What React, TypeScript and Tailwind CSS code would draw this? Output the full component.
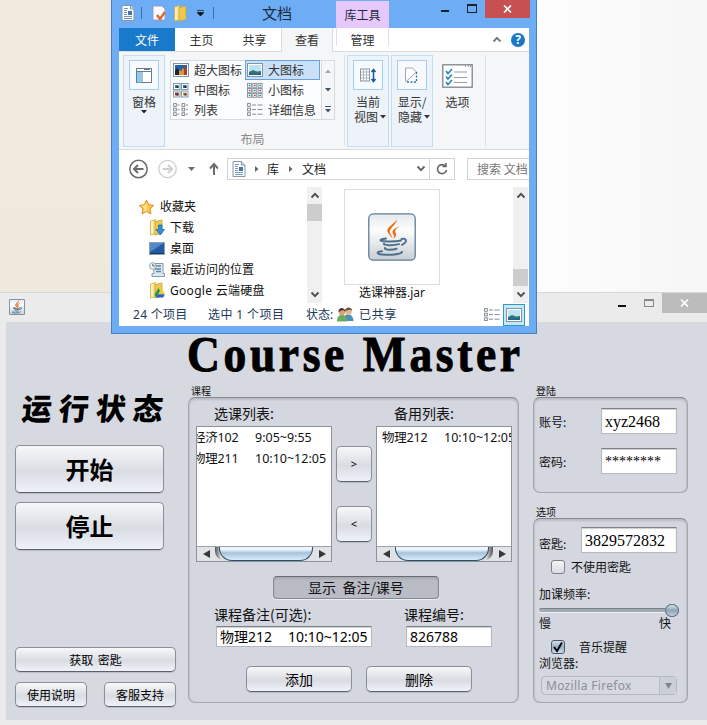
import React from "react";
import type { ReactNode } from "react";

const SANS = "font-['Noto_Sans','Noto_Sans_CJK_SC',sans-serif]";
const CJK = "font-['Noto_Sans_CJK_SC',sans-serif]";

/* ---------- icons ---------- */

function DocIcon({ className = "" }: { className?: string }) {
  return (
    <svg width="14" height="16" viewBox="0 0 14 16" className={className}>
      <path d="M1 .5h8.5l3.500 3.500v11.500H1z" fill="#fbfdff" stroke="#8697a8" />
      <path d="M9.500.5V4H13" fill="#dce6ee" stroke="#8697a8" />
      <path d="M3 3.500h4M3 5.500h3M3 7.500h3M3 9.500h3M3 11.500h8M3 13.500h8" stroke="#7a99b8" />
      <path d="M7 6h4v4H7z" fill="#3c78ac" />
    </svg>
  );
}

function FolderIcon({ badge }: { badge?: "down" | "drive" }) {
  return (
    <svg width="16" height="17" viewBox="0 0 16 17">
      <path d="M1.500 2l5-1.500V15l-5 1z" fill="#f7e08a" stroke="#cfae4c" strokeWidth=".8" />
      <path d="M6 2.500l7-1.500v13.500L6 16z" fill="#efc94f" stroke="#c9a33c" strokeWidth=".8" />
      <path d="M3 2.500v12" stroke="#fff6cd" strokeWidth="1.500" />
      {badge === "down" && (
        <path d="M9.500 6h3.500v4.500h2.500L11.200 16 7 10.500h2.500z" fill="#2f8fe0" stroke="#1b62a8" strokeWidth=".7" />
      )}
      {badge === "drive" && (
        <g>
          <path d="M9.500 6h3l3.300 6h-3z" fill="#f8c927" />
          <path d="M9.500 6L5.500 12.500 7 15.500l4-6.500z" fill="#1c9b58" />
          <path d="M8.500 12.300h7.300L14.300 15.500H7z" fill="#2f62c8" />
        </g>
      )}
    </svg>
  );
}

function JavaIcon({ size }: { size: number }) {
  const small = size < 24;
  return (
    <svg width={size} height={size} viewBox="0 0 48 48">
      <defs>
        <linearGradient id="javaBg" x1="0" y1="0" x2="0" y2="1">
          <stop offset="0" stopColor="#e4e8ec" />
          <stop offset=".35" stopColor="#fdfdfd" />
          <stop offset="1" stopColor="#c9ced3" />
        </linearGradient>
      </defs>
      <rect x=".8" y=".8" width="46.400" height="46.400" rx="4.500" fill="url(#javaBg)" stroke="#5e7d97" strokeWidth={small ? 3 : 1.3} />
      <g stroke="#e8731f" strokeWidth={small ? 1.5 : 0}>
        <path d="M28.500 4.500c2 5-10.500 8.500-9 14 .6 2.500 3.300 4.500 5 7-.5-3-3-4.800-2.600-7.500.7-4 8.600-7.500 6.600-13.500z" fill="#e8731f" />
        <path d="M31.500 13.500c-4.500 1.300-8 3.500-6.800 6.800.8 2 2 2.700.8 5.200 3.200-2.200 3.200-4.300 1.900-6.300-1-1.700.6-3.700 4.100-5.700z" fill="#e8731f" />
      </g>
      <g fill="none" stroke="#4f718d" strokeWidth={small ? 2.8 : 2} strokeLinecap="round">
        <path d="M18 25.500c-4 .5-6.500 1.500-5 2.300 3 1.200 15 .7 20-.4" />
        <path d="M33.500 26c5-1.500 6.500 3 .5 5.800" />
        <path d="M16 30.500c-1.500 2 9 2.200 15 .6" />
        <path d="M17 35c-1 2 7 2.300 11.500.8" />
        <path d="M14 38.300c-5 .3-6.500 2.500 0 3.200 7 .7 19 .2 20-2.600" />
      </g>
    </svg>
  );
}

function Picture({ tone }: { tone: "city" | "lake" }) {
  const city = tone === "city";
  return (
    <svg width="16" height="14" viewBox="0 0 16 14">
      <rect x=".5" y=".5" width="15" height="13" fill="#fff" stroke="#7f94a8" />
      <rect x="2" y="2" width="12" height="10" fill={city ? "#2b5fa5" : "#bfe2f4"} />
      {city ? (
        <g>
          <path d="M2 12V8l2-3 2 2v5z" fill="#1a2438" />
          <path d="M6 12V7l3 1V5l2 1v6z" fill="#d99735" />
          <path d="M11 12V4l3 2v6z" fill="#b53a2c" />
        </g>
      ) : (
        <g>
          <path d="M2 9l4-2 4 1.500L14 8v4H2z" fill="#2c7a75" />
          <path d="M2 10.500h12V12H2z" fill="#2b5f9b" />
        </g>
      )}
    </svg>
  );
}

function MediumTiles() {
  const colors = ["#2c8a8b", "#2a6fb8", "#b3372b", "#d98a2a"];
  return (
    <svg width="16" height="15" viewBox="0 0 16 15">
      {colors.map((c, i) => (
        <g key={c} transform={`translate(${(i % 2) * 8} ${Math.floor(i / 2) * 7.5})`}>
          <rect x=".5" y=".5" width="6.500" height="6" fill="#fff" stroke="#8396a8" />
          <rect x="2" y="2" width="3.500" height="3" fill={c} />
          <rect x="3.500" y="3" width="2" height="2" fill="#20303c" />
        </g>
      ))}
    </svg>
  );
}

function SmallTiles() {
  return (
    <svg width="16" height="15" viewBox="0 0 16 15">
      {[0, 1, 2, 3, 4, 5, 6, 7, 8].map((i) => (
        <g key={i} transform={`translate(${(i % 3) * 5.3} ${Math.floor(i / 3) * 5})`}>
          <rect x=".5" y=".5" width="4" height="3.800" fill="#fff" stroke="#7f8f9f" strokeWidth=".9" />
          <rect x="1.800" y="1.700" width="1.500" height="1.400" fill={i % 2 ? "#b3372b" : "#1f7f78"} />
        </g>
      ))}
    </svg>
  );
}

function ListIcon({ details = false }: { details?: boolean }) {
  return (
    <svg width="16" height="14" viewBox="0 0 16 14">
      {[0, 1, 2].map((i) => (
        <g key={i} transform={`translate(0 ${i * 4.6})`} fill="#fff" stroke="#75818f" strokeWidth=".9">
          <rect x=".6" y=".6" width="2.700" height="2.700" />
          <path d={details ? "M5 2h4M10.500 2h5" : "M4.500 2h2M13 2h2"} />
          {!details && <rect x="9" y=".6" width="2.700" height="2.700" />}
        </g>
      ))}
    </svg>
  );
}

function Down({ className = "" }: { className?: string }) {
  return (
    <svg width="6" height="4" viewBox="0 0 6 4" className={className}>
      <path d="M0 0h6L3 3.600z" fill="currentColor" />
    </svg>
  );
}

function Chevron({ up = false, className = "" }: { up?: boolean; className?: string }) {
  return (
    <svg width="10" height="7" viewBox="0 0 10 7" className={className}>
      <path d={up ? "M1.500 5.500L5 1.800l3.500 3.700" : "M1.500 1.500L5 5.200l3.500-3.700"} fill="none" stroke="currentColor" strokeWidth="1.900" />
    </svg>
  );
}

function People() {
  return (
    <svg width="17" height="15" viewBox="0 0 17 15">
      <path d="M6.500 14c0-5 1.500-6.500 4.500-6.500s5 1.500 5.500 6.500z" fill="#4b90ba" />
      <circle cx="11.500" cy="4.500" r="3.200" fill="#e0b890" />
      <path d="M8 4c0-4 6.500-5 7.300 0l-2-1.500z" fill="#65503f" />
      <path d="M0 14.500C0 9.500 2 8 5 8s4.500 1.500 5 6.500z" fill="#6cab5e" />
      <circle cx="5" cy="5" r="3.300" fill="#d7a67d" />
      <path d="M1.500 5c-.5-5.500 6.500-5.500 7 0L6 3z" fill="#54382c" />
    </svg>
  );
}

/* ---------- explorer window ---------- */

function WindowCross() {
  return (
    <svg width="9" height="8" viewBox="0 0 9 8">
      <path d="M1 .5l7 7M8 .5l-7 7" stroke="#fff" strokeWidth="1.700" />
    </svg>
  );
}

function ExplorerTitle() {
  return (
    <div className="-mr-px flex h-7 shrink-0 items-start text-[#1e2b3b]">
      <div className="ml-[2px] flex h-[26px] items-center">
        <DocIcon />
        <span className="ml-[6px] h-3 w-px bg-[#426f9e]" />
        <svg width="15" height="16" viewBox="0 0 15 16" className="ml-[10px]">
          <path d="M1 1h9l3 3v11H1z" fill="#fafafe" stroke="#939bb8" strokeWidth=".9" />
          <path d="M5 10l3 4 5-7" fill="none" stroke="#dc6a3c" strokeWidth="2.500" />
        </svg>
        <div className="ml-[6px]"><FolderIcon /></div>
        <svg width="7" height="6" viewBox="0 0 7 6" className="ml-2"><path d="M0 .5h7M0 2.500h7L3.500 6z" stroke="#111" strokeWidth=".7" fill="#111" /></svg>
        <span className="ml-[9px] h-3 w-px bg-[#426f9e]" />
      </div>
      <div className={`ml-[48px] h-[26px] text-[15px] leading-[25px] ${CJK}`}>文档</div>
      <div className={`ml-[44px] mt-px h-[27px] w-[53px] bg-[#e6c9fa] text-center text-[12px] leading-[27px] ${CJK}`}>库工具</div>
      <span className="ml-[52px] mt-[10px] h-[2px] w-2 bg-[#18202a]" />
      <span className="ml-[18px] mt-[4px] h-[9px] w-[10px] border border-t-2 border-[#18202a]" />
      <span className="ml-auto flex h-[18px] w-[45px] items-center justify-center bg-[#c75050]"><WindowCross /></span>
    </div>
  );
}

function ExplorerTabs() {
  return (
    <div className={`flex h-6 shrink-0 items-stretch border-b border-[#dadbdc] bg-white text-center text-[12px] leading-[24px] text-[#333] ${CJK}`}>
      <div className="h-[23px] w-14 bg-[#1979ca] text-white">文件</div>
      <div className="w-[53px]">主页</div>
      <div className="w-[53px]">共享</div>
      <div className="-mb-px w-[52px] border-x border-[#dadbdc] bg-[#f5f6f7]">查看</div>
      <div className="ml-[3px] h-[18px] w-[53px] border-x border-[#e8d9ee]">管理</div>
      <div className="ml-auto flex items-center pr-1">
        <Chevron up className="text-[#777]" />
        <span className={`ml-[9px] flex size-[14px] items-center justify-center rounded-full bg-[#1878c6] text-[12px] font-bold leading-none text-white ${SANS}`}>?</span>
      </div>
    </div>
  );
}

function RibbonButton({ icon, children }: { icon: ReactNode; children: ReactNode }) {
  return (
    <div className="flex h-[92px] w-[42px] flex-col items-center border border-[#c3dcf0] bg-[#edf3f8] pt-1">
      <div className="flex h-[30px] w-[30px] shrink-0 items-center justify-center border border-[#a5cdee] bg-[#f6fafd]">{icon}</div>
      {children}
    </div>
  );
}

function GalleryItem({ icon, label, selected = false }: { icon: ReactNode; label: string; selected?: boolean }) {
  return (
    <div className={selected ? "flex h-5 items-center border border-[#6aa3dc] bg-[#c9e0f7] pl-px" : "flex h-5 items-center border border-transparent pl-px"}>
      {icon}
      <span className="ml-[5px] leading-[18px] whitespace-nowrap">{label}</span>
    </div>
  );
}

function Ribbon() {
  return (
    <div className={`flex h-[98px] shrink-0 items-start border-b border-[#dadbdc] bg-[#f5f6f7] pt-[3px] pl-1 text-[12px] leading-4 text-[#333] ${CJK}`}>
      <RibbonButton
        icon={
          <svg width="16" height="15" viewBox="0 0 16 15">
            <rect x=".5" y=".5" width="15" height="14" fill="#fff" stroke="#687d8f" />
            <path d="M1 3.500h14M6 4v11M8 1.500h6" stroke="#687d8f" />
            <rect x="1" y="4" width="4.500" height="10.500" fill="#8dc9f4" />
          </svg>
        }
      >
        <span className="mt-1">窗格</span>
        <Down className="text-[#222]" />
      </RibbonButton>

      <div className="ml-[5px] mt-[5px] w-[165px]">
        <div className="flex h-[60px] border border-[#d8dadd] bg-[#fbfcfd]">
          <div className="-mt-px grid w-[149px] shrink-0 grid-cols-[74px_75px] content-start">
            <GalleryItem icon={<Picture tone="city" />} label="超大图标" />
            <GalleryItem selected icon={<Picture tone="lake" />} label="大图标" />
            <GalleryItem icon={<MediumTiles />} label="中图标" />
            <GalleryItem icon={<SmallTiles />} label="小图标" />
            <GalleryItem icon={<ListIcon />} label="列表" />
            <GalleryItem icon={<ListIcon details />} label="详细信息" />
          </div>
          <div className="ml-px flex w-[14px] flex-col items-center justify-between border-l border-[#d8dadd] bg-[#f5f6f7] pt-2 pb-[6px] text-[#44546a]">
            <Down className="rotate-180 text-[#aaa]" />
            <Down />
            <span className="flex flex-col items-center gap-[2px]"><i className="h-px w-[6px] bg-[#44546a]" /><Down /></span>
          </div>
        </div>
        <div className="mt-[11px] text-center text-[#8a8a8a]">布局</div>
      </div>

      <span className="ml-[9px] h-[91px] w-px bg-[#dddfe1]" />
      <div className="ml-[2px] flex gap-[2px]">
        <RibbonButton
          icon={
            <svg width="17" height="15" viewBox="0 0 17 15">
              <rect x=".5" y="1" width="9" height="12" fill="#fff" stroke="#8799a8" />
              <path d="M1 4h8M1 7h8M1 10h8M3.500 1v12M6.500 1v12" stroke="#9daab5" strokeWidth=".8" />
              <path d="M13.500 2v11M11.500 4l2-2.500 2 2.500M11.500 11l2 2.500 2-2.500" fill="none" stroke="#175b9b" strokeWidth="1.500" />
            </svg>
          }
        >
          <span className="mt-1 h-[15px] leading-[15px]">当前</span>
          <span className="flex h-[15px] items-center gap-[2px] pl-1 leading-[15px]">视图<Down /></span>
        </RibbonButton>
        <RibbonButton
          icon={
            <svg width="14" height="17" viewBox="0 0 14 17">
              <path d="M.5 14V1h7l4 4L.5 15" fill="#fff" stroke="#9ba7b2" />
              <path d="M11.500 5v10H1" fill="none" stroke="#2f6fae" strokeWidth="1.300" strokeDasharray="2 1.500" />
            </svg>
          }
        >
          <span className="mt-1 h-[15px] leading-[15px]">显示/</span>
          <span className="flex h-[15px] items-center gap-[2px] pl-1 leading-[15px]">隐藏<Down /></span>
        </RibbonButton>
      </div>
      <div className="ml-[9px] mt-[9px] flex w-[31px] flex-col items-center">
        <svg width="31" height="24" viewBox="0 0 31 24">
          <rect x=".8" y=".8" width="29.400" height="22.400" fill="#fff" stroke="#747b82" strokeWidth="1.200" />
          <path d="M23 2.200h1M26 2.200h1M28 2.200h1" stroke="#747b82" strokeWidth="1.200" />
          <path d="M4 7l2 2.500 4-4.500M4 12.500L6 15l4-4.500M4 18l2 2.500 4-4.500" fill="none" stroke="#2584be" strokeWidth="1.600" />
          <path d="M12 8h13M12 13.500h13M12 18.500h13" stroke="#979ea4" />
        </svg>
        <span className="mt-[6px]">选项</span>
      </div>
      <span className="ml-[12px] h-[91px] w-px bg-[#dddfe1]" />
    </div>
  );
}

function NavBar() {
  return (
    <div className={`flex h-[37px] shrink-0 items-center overflow-hidden pl-[9px] text-[12px] text-[#222] ${CJK}`}>
      <svg width="90" height="20" viewBox="0 0 90 20" className="shrink-0">
        <circle cx="10.500" cy="10" r="8.700" fill="none" stroke="#6b6b6b" strokeWidth="1.500" />
        <path d="M15.500 10H6.500M10 6l-4 4 4 4" fill="none" stroke="#6b6b6b" strokeWidth="2" />
        <circle cx="39.500" cy="10" r="8.700" fill="none" stroke="#cfcfcf" strokeWidth="1.300" />
        <path d="M34.500 10h9M40 6l4 4-4 4" fill="none" stroke="#cfcfcf" strokeWidth="2" />
        <path d="M60 8h7l-3.500 4z" fill="#6b6b6b" />
        <path d="M86 16V6M82 9.500l4-4.500 4 4.500" fill="none" stroke="#6b6b6b" strokeWidth="2" />
      </svg>
      <div className="ml-[9px] flex h-[22px] w-[228px] shrink-0 items-center border border-[#d4d4d4]">
        <DocIcon className="ml-1" />
        <Down className="ml-[8px] -rotate-90 text-[#666]" />
        <span className="ml-[7px]">库</span>
        <Down className="ml-[9px] -rotate-90 text-[#666]" />
        <span className="ml-[8px]">文档</span>
        <Chevron className="ml-auto text-[#666]" />
        <span className="ml-[3px] flex h-full w-[25px] items-center justify-center border-l border-[#d4d4d4]">
          <svg width="12" height="12" viewBox="0 0 12 12"><path d="M9.500 3.200A4.500 4.500 0 1 0 10.500 7M6.500 3.500H10V0" fill="none" stroke="#686868" strokeWidth="1.600" /></svg>
        </span>
      </div>
      <div className="ml-3 flex h-[22px] w-[90px] shrink-0 items-center border border-[#d4d4d4] pl-[9px] text-[#777]">搜索 文档</div>
    </div>
  );
}

function ExplorerScroll({ low = false }: { low?: boolean }) {
  return (
    <div className="flex h-[116px] w-[15px] shrink-0 flex-col items-center bg-[#f0f0f0] text-[#505050]">
      <span className="flex h-[17px] items-center"><Chevron up /></span>
      <span className={low ? "mt-[65px] h-[17px] w-full bg-[#cdcdcd]" : "h-[17px] w-full bg-[#cdcdcd]"} />
      <span className="mt-auto flex h-[17px] items-center"><Chevron /></span>
    </div>
  );
}

const favorites: { label: string; icon: ReactNode }[] = [
  { label: "下载", icon: <FolderIcon badge="down" /> },
  {
    label: "桌面",
    icon: (
      <svg width="16" height="13" viewBox="0 0 16 13">
        <rect x=".5" y=".5" width="15" height="12" fill="#235aa4" stroke="#8ea2b5" />
        <path d="M1 1h14L1 10z" fill="#5688c7" />
        <path d="M1 11.500h14" stroke="#15365e" />
      </svg>
    ),
  },
  {
    label: "最近访问的位置",
    icon: (
      <svg width="16" height="15" viewBox="0 0 16 15">
        <path d="M4 1.500h10v10h1.500v3H3v-3h2z" fill="#dce8f0" stroke="#8098a8" />
        <path d="M7 4h5M6 7h6M7 9.500h5" stroke="#5e86a5" strokeWidth="1.300" />
        <circle cx="3.800" cy="4" r="3.300" fill="#eef2f3" stroke="#98a4ad" />
        <path d="M3.800 2v2h2" fill="none" stroke="#596874" />
      </svg>
    ),
  },
  { label: "Google 云端硬盘", icon: <FolderIcon badge="drive" /> },
];

function ExplorerBody() {
  return (
    <div className={`flex h-[116px] shrink-0 text-[12px] leading-[21px] text-[#111] ${SANS}`}>
      <div className="w-[188px] shrink-0 pt-[9px]">
        <div className="flex h-[21px] items-center pl-[19px]">
          <svg width="17" height="16" viewBox="0 0 17 16">
            <path d="M8.500 1l2.200 4.800 5 .6-3.700 3.500 1 5.100-4.500-2.600L4 15l1-5.100L1.300 6.400l5-.6z" fill="#ffc94d" stroke="#e08b2b" />
            <path d="M8.500 3v8l-3 2 1-4-3-2 3.500-.5z" fill="#ffe597" />
          </svg>
          <span className="ml-[5px]">收藏夹</span>
        </div>
        {favorites.map((f) => (
          <div key={f.label} className="flex h-[21px] items-center pl-[30px]">
            {f.icon}
            <span className={f.label.startsWith("Google") ? "ml-[5px] tracking-[0.3px] whitespace-nowrap" : "ml-[5px] whitespace-nowrap"}>{f.label}</span>
          </div>
        ))}
      </div>
      <ExplorerScroll />
      <div className="ml-[22px] w-24 pt-[2px]">
        <div className="flex h-24 items-center justify-center border border-[#dedede]"><JavaIcon size={48} /></div>
        <div className="-mt-[2px] text-center leading-[19px]">选课神器.jar</div>
      </div>
      <div className="ml-auto mr-px"><ExplorerScroll low /></div>
    </div>
  );
}

function ExplorerStatus() {
  return (
    <div className={`flex h-[23px] shrink-0 items-center pl-[14px] text-[12px] text-[#1e395b] ${SANS}`}>
      <span className="w-[75px] tracking-[0.3px]">24 个项目</span>
      <span className="w-[98px] tracking-[0.4px]">选中 1 个项目</span>
      <span className="w-[31px]">状态:</span>
      <People />
      <span className="ml-[5px] tracking-[0.7px]">已共享</span>
      <div className="ml-auto flex items-center"><ListIcon details /></div>
      <div className="mr-1 ml-[3px] flex h-[22px] w-[22px] items-center justify-center border border-[#2e9cc6] bg-[#c6e8f4]"><Picture tone="lake" /></div>
    </div>
  );
}

function Explorer() {
  return (
    <section className="absolute top-0 left-[111px] flex h-[334px] w-[426px] flex-col border border-t-0 border-[#4a7fbd] bg-[#6cadf6] px-[7px]">
      <ExplorerTitle />
      <div className="flex h-[298px] shrink-0 flex-col overflow-hidden bg-white">
        <ExplorerTabs />
        <Ribbon />
        <NavBar />
        <ExplorerBody />
        <ExplorerStatus />
      </div>
    </section>
  );
}

/* ---------- course master window ---------- */

function PushButton({ className, children }: { className: string; children: ReactNode }) {
  return (
    <button
      className={`flex shrink-0 items-center justify-center rounded-[5px] border border-[#8b8f98] border-b-[#5c6069] bg-linear-to-b from-[#f7f8fa] via-[#d9dce2] via-55% to-[#eff2f8] whitespace-pre text-black shadow-[0_1px_1px_#b9bdc6] ${className}`}
    >
      {children}
    </button>
  );
}

function Group({ title, className, children }: { title: string; className: string; children: ReactNode }) {
  return (
    <div>
      <div className={`h-3 pl-[3px] text-[10px] leading-[12px] ${CJK}`}>{title}</div>
      <div className={`flex flex-col rounded-[7px] border border-[#a3a6ae] border-t-[#85888f] bg-[#d4d7df] shadow-[inset_0_2px_2px_#b9bcc4,inset_1px_0_1px_#c2c5cc,inset_-1px_0_1px_#c2c5cc] ${className}`}>
        {children}
      </div>
    </div>
  );
}

function Field({ className, children }: { className: string; children: ReactNode }) {
  return (
    <div className={`shrink-0 overflow-hidden border border-[#b5b8bf] border-t-[#7f828a] bg-white pl-[3px] whitespace-pre text-black shadow-[inset_0_1px_1px_#ccc] ${className}`}>
      {children}
    </div>
  );
}

function CourseList({ rows, thumb, shift }: { rows: [string, string][]; thumb: "left" | "right"; shift: string }) {
  return (
    <div className="flex h-[136px] w-[136px] flex-col overflow-hidden border border-[#8f929a] bg-white">
      <div className={`h-[119px] shrink-0 text-[12.5px] leading-[21px] ${SANS}`}>
        {rows.map(([course, time]) => (
          <div key={course} className={`flex h-[21px] whitespace-nowrap ${shift}`}>
            <span className="w-[62px] shrink-0 tracking-[-0.2px]">{course}</span>
            <span>{time}</span>
          </div>
        ))}
      </div>
      <div className="flex h-[15px] shrink-0 items-stretch border-t border-[#9fa2aa] bg-[#e1e3e8]">
        <span className="flex w-[18px] items-center justify-center"><i className="border-y-[4px] border-r-[7px] border-y-transparent border-r-[#373737]" /></span>
        <div className={thumb === "right" ? "flex flex-1 justify-end rounded-b-[10px] bg-linear-to-r from-[#555] via-[#ddd] via-6% to-[#ddd]" : "flex flex-1 justify-start rounded-b-[10px] bg-linear-to-r from-[#ddd] via-[#ddd] via-93% to-[#555]"}>
          <span className="h-[14px] w-[94px] rounded-b-[13px] border border-t-0 border-[#2e4e69] bg-linear-to-b from-[#eaf5fd] from-20% via-[#a7c2d8] via-45% to-[#d7eeff]" />
        </div>
        <span className="flex w-[18px] items-center justify-center"><i className="border-y-[4px] border-l-[7px] border-y-transparent border-l-[#373737]" /></span>
      </div>
    </div>
  );
}

function LeftColumn() {
  return (
    <div className={`flex w-[182px] shrink-0 flex-col pl-[9px] ${CJK}`}>
      <div className="mt-[65px] ml-[7px] h-[42px] origin-left -skew-x-6 text-[30px] leading-[40px] font-black tracking-[7px] whitespace-nowrap text-black">运行状态</div>
      <PushButton className="mt-4 h-[48px] w-[149px] text-[24px] font-bold">开始</PushButton>
      <PushButton className="mt-[9px] h-[48px] w-[149px] text-[24px] font-bold">停止</PushButton>
      <PushButton className="mt-[97px] h-[25px] w-[161px] text-[12px] [word-spacing:2px]">获取 密匙</PushButton>
      <div className="mt-[10px] flex w-[161px] justify-between">
        <PushButton className="h-[25px] w-[72px] text-[12px]">使用说明</PushButton>
        <PushButton className="h-[25px] w-[72px] text-[12px]">客服支持</PushButton>
      </div>
    </div>
  );
}

function CenterColumn() {
  return (
    <div className="flex w-[331px] shrink-0 flex-col">
      <h1 className="h-[63px] pt-[8px] font-['Liberation_Serif',serif] text-[50px] leading-[48px] font-bold tracking-[4px] whitespace-nowrap text-black [-webkit-text-stroke:1px_black]">
        <span className="block w-[372px] origin-left -translate-x-px scale-x-[0.91]">Course Master</span>
      </h1>
      <Group title="课程" className="h-[306px] w-[331px]">
        <div className={`mt-1 flex h-6 text-[14px] leading-[22px] ${CJK}`}>
          <span className="ml-[25px] w-[180px]">选课列表:</span>
          <span>备用列表:</span>
        </div>
        <div className="ml-[7px] flex items-start">
          <CourseList rows={[["经济102", "9:05~9:55"], ["物理211", "10:10~12:05"]]} thumb="right" shift="-ml-[4px]" />
          <div className="ml-1 flex w-9 flex-col gap-6 pt-5">
            <PushButton className={`h-9 w-9 text-[11px] ${SANS}`}>{">"}</PushButton>
            <PushButton className={`h-9 w-9 text-[11px] ${SANS}`}>{"<"}</PushButton>
          </div>
          <div className="ml-1">
            <CourseList rows={[["物理212", "10:10~12:05"]]} thumb="left" shift="ml-[5px]" />
          </div>
        </div>
        <div className={`mt-[14px] ml-[84px] flex h-[23px] w-[166px] shrink-0 items-center justify-center rounded-[4px] border border-[#858890] border-t-[#686b73] bg-[#b9bcc4] text-[14px] whitespace-pre shadow-[inset_0_2px_2px_#a6a9b0,0_1px_1px_#edf0f4] ${CJK}`}>
          显示  备注/课号
        </div>
        <div className={`mt-1 flex h-[23px] shrink-0 pl-[25px] text-[14px] leading-[22px] ${CJK}`}>
          <span className="w-[190px]">课程备注(可选):</span>
          <span>课程编号:</span>
        </div>
        <div className={`ml-[27px] flex text-[14px] leading-[19px] ${SANS}`}>
          <Field className="flex h-[21px] w-[156px]">
            <span className="w-[68px] shrink-0">物理212</span><span>10:10~12:05</span>
          </Field>
          <Field className="ml-[34px] h-[21px] w-[86px]">826788</Field>
        </div>
        <div className={`mt-[19px] ml-[57px] flex gap-[14px] text-[14px] ${CJK}`}>
          <PushButton className="h-[26px] w-[106px]">添加</PushButton>
          <PushButton className="h-[26px] w-[106px]">删除</PushButton>
        </div>
      </Group>
    </div>
  );
}

function RightColumn() {
  return (
    <div className={`ml-[14px] w-[155px] shrink-0 pt-[63px] text-[12px] ${CJK}`}>
      <Group title="登陆" className="h-[96px] w-[155px] gap-[14px] pt-[10px] pr-[10px] pl-[5px]">
        <div className="flex h-[26px] items-center justify-between">
          <span className="pt-[2px]">账号:</span>
          <Field className="h-[26px] w-[76px] font-['Liberation_Serif',serif] text-[16px] leading-[25px]">xyz2468</Field>
        </div>
        <div className="flex h-[26px] items-center justify-between">
          <span className="pt-[2px]">密码:</span>
          <Field className="h-[26px] w-[76px] font-['Liberation_Serif',serif] text-[14px] leading-[25px]">********</Field>
        </div>
      </Group>
      <div className="mt-[13px]">
        <Group title="选项" className="h-[185px] w-[155px] pt-2 pr-[10px] pl-[5px]">
          <div className="flex h-[26px] shrink-0 items-center justify-between">
            <span className="pt-2">密匙:</span>
            <Field className="h-[26px] w-24 font-['Liberation_Serif',serif] text-[16px] leading-[25px]">3829572832</Field>
          </div>
          <div className="mt-[6px] flex h-4 items-center pl-3">
            <span className="size-[14px] rounded-[3px] border border-[#7e828b] bg-linear-to-b from-[#f5f5f7] to-[#d9dce2]" />
            <span className="ml-[6px]">不使用密匙</span>
          </div>
          <div className="mt-[10px] h-[17px] leading-[17px]">加课频率:</div>
          <div className="mt-[1px] flex h-[14px] items-center">
            <span className="h-[4px] w-[127px] rounded-l border-t border-[#7b818a] bg-[#a3aab3] shadow-[0_1px_0_#eef0f3]" />
            <span className="-mr-[2px] h-[13px] w-[14px] shrink-0 rounded-full border border-[#4b5f70] bg-linear-to-b from-[#d5dde5] via-[#91a5b7] to-[#bfd1df]" />
          </div>
          <div className="flex h-[14px] justify-between pr-[6px] leading-[12px]"><span>慢</span><span>快</span></div>
          <div className="mt-[8px] flex h-4 items-center pl-3">
            <span className="flex size-[14px] items-center justify-center rounded-[3px] border border-[#465b70] bg-linear-to-b from-[#d7e0e8] via-[#9db0c2] to-[#c6dced]">
              <svg width="12" height="13" viewBox="0 0 12 13"><path d="M2 6l3 4L10 1.500" fill="none" stroke="#000" strokeWidth="2" /></svg>
            </span>
            <span className="ml-[14px]">音乐提醒</span>
          </div>
          <div className="h-[15px] leading-[15px]">浏览器:</div>
          <div className={`mt-[6px] ml-[2px] flex h-[19px] w-[136px] items-center rounded-[4px] border border-[#b4b7bf] bg-[#d6d9e0] pl-1 text-[12px] text-[#8c8f98] ${SANS}`}>
            <span className="tracking-[0.3px]">Mozilla Firefox</span>
            <span className="ml-auto flex h-full w-[17px] items-center justify-center border-l border-[#babdc5] bg-[#cbd0d8]">
              <svg width="7" height="6" viewBox="0 0 7 6"><path d="M0 0h7L3.500 6z" fill="#82858c" /></svg>
            </span>
          </div>
        </Group>
      </div>
    </div>
  );
}

function CourseWindow() {
  return (
    <section className="flex h-[433px] w-full flex-col border-t border-[#d7d7d7] bg-[#ebebeb] text-[#111]">
      <div className="flex h-[29px] shrink-0 items-start">
        <div className="mt-[6px] ml-[9px]"><JavaIcon size={16} /></div>
        <span className="mt-[12px] ml-auto h-[2px] w-2 bg-[#111]" />
        <span className="mt-[6px] ml-[18px] h-2 w-[10px] border border-t-2 border-[#888]" />
        <span className="ml-[8px] flex h-5 w-[45px] items-center justify-center bg-[#bcbcbc]"><WindowCross /></span>
      </div>
      <main className="ml-[6px] flex h-[398px] shrink-0 bg-[#d6d9df]">
        <LeftColumn />
        <CenterColumn />
        <RightColumn />
      </main>
    </section>
  );
}

export default function App() {
  return (
    <div className="relative flex h-[725px] w-[707px] flex-col overflow-hidden bg-[#ebebeb]">
      <div className="flex h-[292px] shrink-0 justify-between bg-[#fafafa]">
        <div className="w-[300px] bg-linear-to-b from-[#f2e9de] to-[#efe9dd]" />
        <div className="w-[170px] bg-linear-to-r from-[#fdfdfd] to-[#f7f6f6]" />
      </div>
      <CourseWindow />
      <Explorer />
    </div>
  );
}
